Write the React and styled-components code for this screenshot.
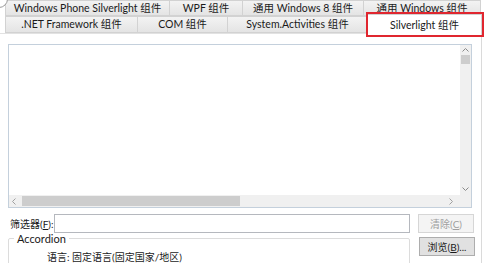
import React from 'react'
import styled, { createGlobalStyle } from 'styled-components'

const GlobalStyle = createGlobalStyle`
  html, body {
    margin: 0;
    padding: 0;
    background: #ffffff;
  }
  body {
    font-family: 'Lato', 'Noto Sans CJK SC', sans-serif;
  }
`

const Window = styled.div`
  position: relative;
  width: 486px;
  height: 263px;
  overflow: hidden;
  background: #ffffff;
  color: #1a1a1a;
  font-size: 10.5px;
`

const CornerMark = styled.div`
  position: absolute;
  left: -10px;
  top: -10px;
  width: 16px;
  height: 16px;
  border-radius: 50%;
  border: 1px solid #9a9a9a;
  background: #ffffff;
`

const TabStrip = styled.div`
  padding-left: 5px;
  width: 477px;
`

const TabRow = styled.div`
  display: flex;
  height: ${(p) => p.$height}px;
`

const Tab = styled.div`
  flex: 0 0 ${(p) => p.$width}px;
  box-sizing: border-box;
  display: flex;
  align-items: center;
  justify-content: center;
  line-height: 13px;
  border: 1px solid #d2d2d2;
  border-left-width: ${(p) => (p.$first ? 1 : 0)}px;
  background: linear-gradient(#f3f3f3, #e4e4e4);
  white-space: nowrap;
`

const ActiveTab = styled(Tab)`
  background: #ffffff;
  border-bottom: none;
  margin-top: -2px;
  height: 21px;
  outline: 2px solid #e0262f;
  position: relative;
  z-index: 2;
`

const Panel = styled.div`
  width: 473px;
  height: 230px;
  padding: 10px 0 0 8px;
  border-right: 1px solid #dadada;
  border-top: 1px solid #e2e2e2;
`

const ListBox = styled.div`
  box-sizing: border-box;
  width: 464px;
  height: 164px;
  border: 1px solid #c4d0dc;
  display: grid;
  grid-template-columns: 1fr 11px;
  grid-template-rows: 1fr 12px;
`

const ListArea = styled.div`
  background: #ffffff;
`

const VScroll = styled.div`
  background: #f0f0f0;
  display: flex;
  flex-direction: column;
  align-items: center;
  padding-top: 3px;
`

const HScroll = styled.div`
  background: #f0f0f0;
  display: flex;
  align-items: center;
  padding-left: 3px;
`

const Corner = styled.div`
  background: #f0f0f0;
`

const Arrow = styled.svg`
  flex: 0 0 auto;
  display: block;
`

const VThumb = styled.div`
  width: 9px;
  height: 9px;
  margin-top: 3px;
  background: #cdcdcd;
  flex: 0 0 auto;
`

const Spacer = styled.div`
  flex: 1 1 auto;
`

const HThumb = styled.div`
  width: 218px;
  height: 10px;
  margin-left: 6px;
  background: #cdcdcd;
  flex: 0 0 auto;
`

const FilterRow = styled.div`
  display: flex;
  align-items: center;
  margin-top: 6px;
  height: 19px;
`

const Label = styled.span`
  width: 46px;
  padding-left: 2px;
  box-sizing: border-box;
  white-space: nowrap;
  font-size: 10px;
`

const TextInput = styled.div`
  box-sizing: border-box;
  width: 356px;
  height: 19px;
  border: 1px solid #b5b8be;
  background: #ffffff;
`

const Button = styled.div`
  box-sizing: border-box;
  margin-left: 8px;
  width: 56px;
  height: 19px;
  display: flex;
  align-items: center;
  justify-content: center;
  white-space: nowrap;
  font-size: 10px;
  border: 1px solid ${(p) => (p.$disabled ? '#d6d6d6' : '#adadad')};
  background: ${(p) => (p.$disabled ? '#f4f4f4' : '#e1e1e1')};
  color: ${(p) => (p.$disabled ? '#9f9f9f' : '#1a1a1a')};
`

const GroupRow = styled.div`
  display: flex;
  align-items: flex-start;
`

const GroupBox = styled.fieldset`
  box-sizing: border-box;
  width: 402px;
  height: 40px;
  margin: 0;
  padding: 7px 0 0 0;
  border: 1px solid #dcdcdc;
  border-radius: 2px;
  legend {
    padding: 0 3px;
    margin-left: 5px;
    font-size: 11px;
    line-height: 11px;
  }
`

const GroupText = styled.div`
  padding-left: 38px;
  white-space: nowrap;
  font-size: 10px;
  line-height: 12px;
`

const GroupButton = styled(Button)`
  margin-top: 4px;
  margin-left: 9px;
`

const tabsTop = [
  ['Windows Phone Silverlight 组件', 165],
  ['WPF 组件', 73],
  ['通用 Windows 8 组件', 121],
  ['通用 Windows 组件', 117],
]

const tabsBottom = [
  ['.NET Framework 组件', 133],
  ['COM 组件', 90],
  ['System.Activities 组件', 140],
]

export default function App() {
  return (
    <>
      <GlobalStyle />
      <Window>
        <TabStrip>
          <TabRow $height={16}>
            {tabsTop.map(([name, w], i) => (
              <Tab key={name} $width={w} $first={i === 0}>
                {name}
              </Tab>
            ))}
          </TabRow>
          <TabRow $height={17}>
            {tabsBottom.map(([name, w], i) => (
              <Tab key={name} $width={w} $first={i === 0}>
                {name}
              </Tab>
            ))}
            <ActiveTab $width={114}>Silverlight 组件</ActiveTab>
          </TabRow>
        </TabStrip>
        <Panel>
          <ListBox>
            <ListArea />
            <VScroll>
              <Arrow width="7" height="4" viewBox="0 0 7 4">
                <path d="M0.5 3.5 L3.5 0.5 L6.5 3.5" fill="none" stroke="#8a8a8a" />
              </Arrow>
              <VThumb />
              <Spacer />
              <Arrow width="7" height="4" viewBox="0 0 7 4" style={{ marginBottom: 4 }}>
                <path d="M0.5 0.5 L3.5 3.5 L6.5 0.5" fill="none" stroke="#8a8a8a" />
              </Arrow>
            </VScroll>
            <HScroll>
              <Arrow width="4" height="7" viewBox="0 0 4 7">
                <path d="M3.5 0.5 L0.5 3.5 L3.5 6.5" fill="none" stroke="#a0a0a0" />
              </Arrow>
              <HThumb />
              <Spacer />
              <Arrow width="4" height="7" viewBox="0 0 4 7" style={{ marginRight: 7 }}>
                <path d="M0.5 0.5 L3.5 3.5 L0.5 6.5" fill="none" stroke="#a0a0a0" />
              </Arrow>
            </HScroll>
            <Corner />
          </ListBox>
          <FilterRow>
            <Label>
              筛选器(<u>F</u>):
            </Label>
            <TextInput />
            <Button $disabled>
              清除(<u>C</u>)
            </Button>
          </FilterRow>
          <GroupRow>
            <GroupBox>
              <legend>Accordion</legend>
              <GroupText>语言: 固定语言(固定国家/地区)</GroupText>
            </GroupBox>
            <GroupButton>
              浏览(<u>B</u>)...
            </GroupButton>
          </GroupRow>
        </Panel>
        <CornerMark />
      </Window>
    </>
  )
}
